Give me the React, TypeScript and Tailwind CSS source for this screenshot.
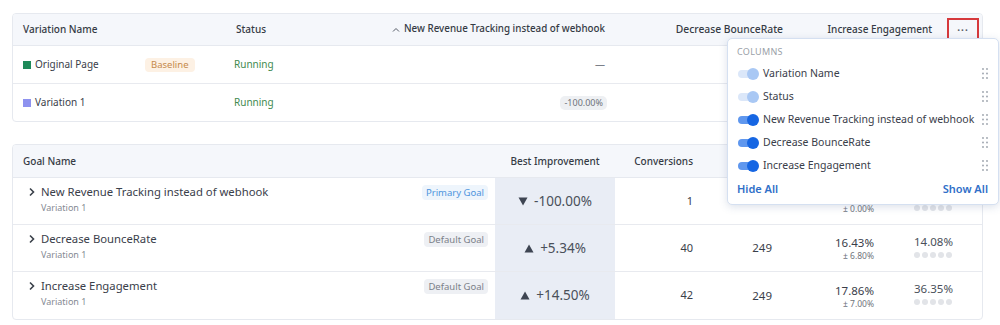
import React from "react";

const font = { fontFamily: '"Noto Sans", "Open Sans", sans-serif' };

function Toggle({ on }: { on: boolean }) {
  return (
    <div className="relative w-[21px] h-[12px] flex items-center shrink-0">
      <div className={`w-[20px] h-[8px] rounded-full ${on ? "bg-[#5f97ee]" : "bg-[#dbe7f9]"}`} />
      <div className={`absolute right-0 top-0 w-[12px] h-[12px] rounded-full ${on ? "bg-[#1666e3]" : "bg-[#a9c8f4]"}`} />
    </div>
  );
}

function Grip() {
  return (
    <svg width="6" height="11" viewBox="0 0 6 11" className="shrink-0">
      {[1, 5.5, 10].map((y) =>
        [1, 5].map((x) => <circle key={`${x}-${y}`} cx={x} cy={y} r="0.9" fill="#9aa1ab" />)
      )}
    </svg>
  );
}

function Dots() {
  return (
    <div className="flex gap-[2px]">
      {[0, 1, 2, 3, 4].map((i) => (
        <div key={i} className="w-[6px] h-[6px] rounded-full bg-[#e2e4e8]" />
      ))}
    </div>
  );
}

function Tri({ up }: { up: boolean }) {
  return (
    <svg width="10" height="9" viewBox="0 0 10 9" className="shrink-0">
      {up ? <path d="M5 0.5 L9.5 8.5 L0.5 8.5 Z" fill="#3e4552" /> : <path d="M0.5 0.5 L9.5 0.5 L5 8.5 Z" fill="#3e4552" />}
    </svg>
  );
}

function GoalRow({
  title,
  badge,
  primary,
  best,
  up,
  conv,
  visitors,
  rate,
  pm,
  imp,
  last,
}: {
  title: string;
  badge: string;
  primary?: boolean;
  best: string;
  up: boolean;
  conv: string;
  visitors?: string;
  rate?: string;
  pm: string;
  imp?: string;
  last?: boolean;
}) {
  return (
    <div className={`flex h-[47px] ${last ? "" : "border-b border-[#e8eaef]"}`}>
      <div className="w-[482px] flex pl-[15px] pr-[7px] pt-[5px]">
        <div className="flex-1">
          <div className="flex items-center h-[18px]">
            <svg width="8" height="10" viewBox="0 0 8 10" className="mr-[5px]">
              <path d="M2 1.5 L5.5 5 L2 8.5" stroke="#3a404a" strokeWidth="1.6" fill="none" />
            </svg>
            <span className="text-[11.3px] text-[#3a404a]">{title}</span>
          </div>
          <div className="pl-[13px] text-[9px] text-[#858a93] leading-[14px]">Variation 1</div>
        </div>
        <div className="flex items-center h-[18px]">
          <span
            className={`px-[4px] h-[15px] leading-[15px] rounded-[4px] text-[9.5px] ${
              primary ? "bg-[#eef5fc] text-[#4d94dc]" : "bg-[#eef0f4] text-[#7b8089]"
            }`}
          >
            {badge}
          </span>
        </div>
      </div>
      <div className="w-[120px] bg-[#e9edf5] flex items-center justify-center text-[13.5px] text-[#4a505a] gap-[6px]">
        <Tri up={up} />
        <span>{best}</span>
      </div>
      <div className="w-[86px] flex items-center justify-end pr-[8px] text-[11px] text-[#3a404a]">{conv}</div>
      <div className="w-[80px] flex items-center justify-end pr-[9px] text-[11.5px] text-[#3a404a]">{visitors}</div>
      <div className="w-[115px] flex flex-col items-end justify-center pr-[22px] pt-[1px]">
        <div className="text-[11.5px] text-[#3a404a] leading-[15px]">{rate ?? "\u00a0"}</div>
        <div className="text-[8.5px] text-[#6f747c] leading-[12px]">{pm}</div>
      </div>
      <div className="flex-1 flex flex-col pl-[18px] pt-[9px]">
        <div className="text-[11.5px] text-[#4a505a] leading-[15px] mb-[3px]">{imp ?? "\u00a0"}</div>
        <Dots />
      </div>
    </div>
  );
}

export default function App() {
  return (
    <div className="relative w-[1000px] h-[325px] bg-white overflow-hidden pt-[13px] pl-[12px] pr-[17px]" style={font}>
      {/* Top card */}
      <div className="border border-[#e6e9ef] rounded-[4px] overflow-hidden">
        <div className="flex h-[32px] bg-[#f5f7fb] border-b border-[#e6e9ef] items-center text-[10px] font-medium text-[#353b45]">
          <div className="w-[213px] pl-[10px]">Variation Name</div>
          <div className="w-[115px] pl-[10px]">Status</div>
          <div className="w-[275px] flex justify-end pr-[11px] items-center gap-[4px]">
            <svg width="8" height="6" viewBox="0 0 8 6">
              <path d="M1 4.5 L4 1.5 L7 4.5" stroke="#555b66" strokeWidth="1" fill="none" />
            </svg>
            <span className="text-[9.8px]">New Revenue Tracking instead of webhook</span>
          </div>
          <div className="w-[175px] flex justify-end pr-[8px] text-[10.3px]">Decrease BounceRate</div>
          <div className="w-[150px] flex justify-end pr-[9px]">Increase Engagement</div>
          <div className="flex-1 flex items-center">
            <div className="ml-[6px] w-[32px] h-[23px] border-2 border-[#d6393c] flex items-center justify-center">
              <span className="text-[#555b66] text-[10px] leading-none tracking-[1px] -mt-[5px] font-bold">...</span>
            </div>
          </div>
        </div>
        <div className="flex h-[38px] items-center border-b border-[#e8eaef] text-[10px]">
          <div className="w-[213px] pl-[10px] flex items-center">
            <div className="w-[8px] h-[8px] bg-[#1e8a5a] mr-[4px]" />
            <span className="text-[#3a404a] w-[110px]">Original Page</span>
            <span className="px-[6px] h-[14px] leading-[14px] rounded-[4px] bg-[#fdf1e4] text-[#c58a4b] text-[9.5px]">Baseline</span>
          </div>
          <div className="w-[115px] pl-[8px] text-[#3f8a4f]">Running</div>
          <div className="w-[275px] flex justify-end pr-[11px] text-[#7b8089]">—</div>
        </div>
        <div className="flex h-[37px] items-center text-[10px]">
          <div className="w-[213px] pl-[10px] flex items-center">
            <div className="w-[8px] h-[8px] bg-[#8e92ef] mr-[4px]" />
            <span className="text-[#3a404a]">Variation 1</span>
          </div>
          <div className="w-[115px] pl-[8px] text-[#3f8a4f]">Running</div>
          <div className="w-[275px] flex justify-end pr-[9px]">
            <span className="px-[4px] h-[14px] leading-[14px] rounded-[5px] bg-[#eef0f3] text-[#6e737b] text-[9px]">-100.00%</span>
          </div>
        </div>
      </div>

      {/* Bottom card */}
      <div className="mt-[22px] border border-[#e6e9ef] rounded-[4px] overflow-hidden">
        <div className="flex h-[33px] bg-[#f5f7fb] border-b border-[#e6e9ef] items-center text-[10px] font-medium text-[#353b45]">
          <div className="w-[482px] pl-[10px]">Goal Name</div>
          <div className="w-[120px] text-center">Best Improvement</div>
          <div className="w-[86px] text-right pr-[8px]">Conversions</div>
        </div>
        <GoalRow
          title="New Revenue Tracking instead of webhook"
          badge="Primary Goal"
          primary
          best="-100.00%"
          up={false}
          conv="1"
          pm="± 0.00%"
        />
        <GoalRow
          title="Decrease BounceRate"
          badge="Default Goal"
          best="+5.34%"
          up
          conv="40"
          visitors="249"
          rate="16.43%"
          pm="± 6.80%"
          imp="14.08%"
        />
        <GoalRow
          title="Increase Engagement"
          badge="Default Goal"
          best="+14.50%"
          up
          conv="42"
          visitors="249"
          rate="17.86%"
          pm="± 7.00%"
          imp="36.35%"
          last
        />
      </div>

      {/* Columns popover */}
      <div className="absolute left-[727px] top-[38px] w-[272px] h-[167px] bg-white border border-[#d5e0f1] rounded-[5px] shadow-[0_2px_8px_rgba(60,90,140,0.18)] pl-[9px] pr-[10px] pt-[6px]">
        <div className="text-[9px] text-[#9a9fa8] tracking-[0.3px] h-[14px] leading-[14px]">COLUMNS</div>
        <div className="mt-[3px]">
          {[
            ["Variation Name", false],
            ["Status", false],
            ["New Revenue Tracking instead of webhook", true],
            ["Decrease BounceRate", true],
            ["Increase Engagement", true],
          ].map(([label, on]) => (
            <div key={label as string} className="flex items-center h-[23px]">
              <div className="pl-[1px]">
                <Toggle on={on as boolean} />
              </div>
              <span className="ml-[4px] text-[10.5px] text-[#3a404a] flex-1 whitespace-nowrap">{label as string}</span>
              <Grip />
            </div>
          ))}
        </div>
        <div className="flex justify-between items-center h-[23px] mt-[1px] text-[11px] font-semibold text-[#2f6fc8]">
          <span>Hide All</span>
          <span>Show All</span>
        </div>
      </div>
    </div>
  );
}
